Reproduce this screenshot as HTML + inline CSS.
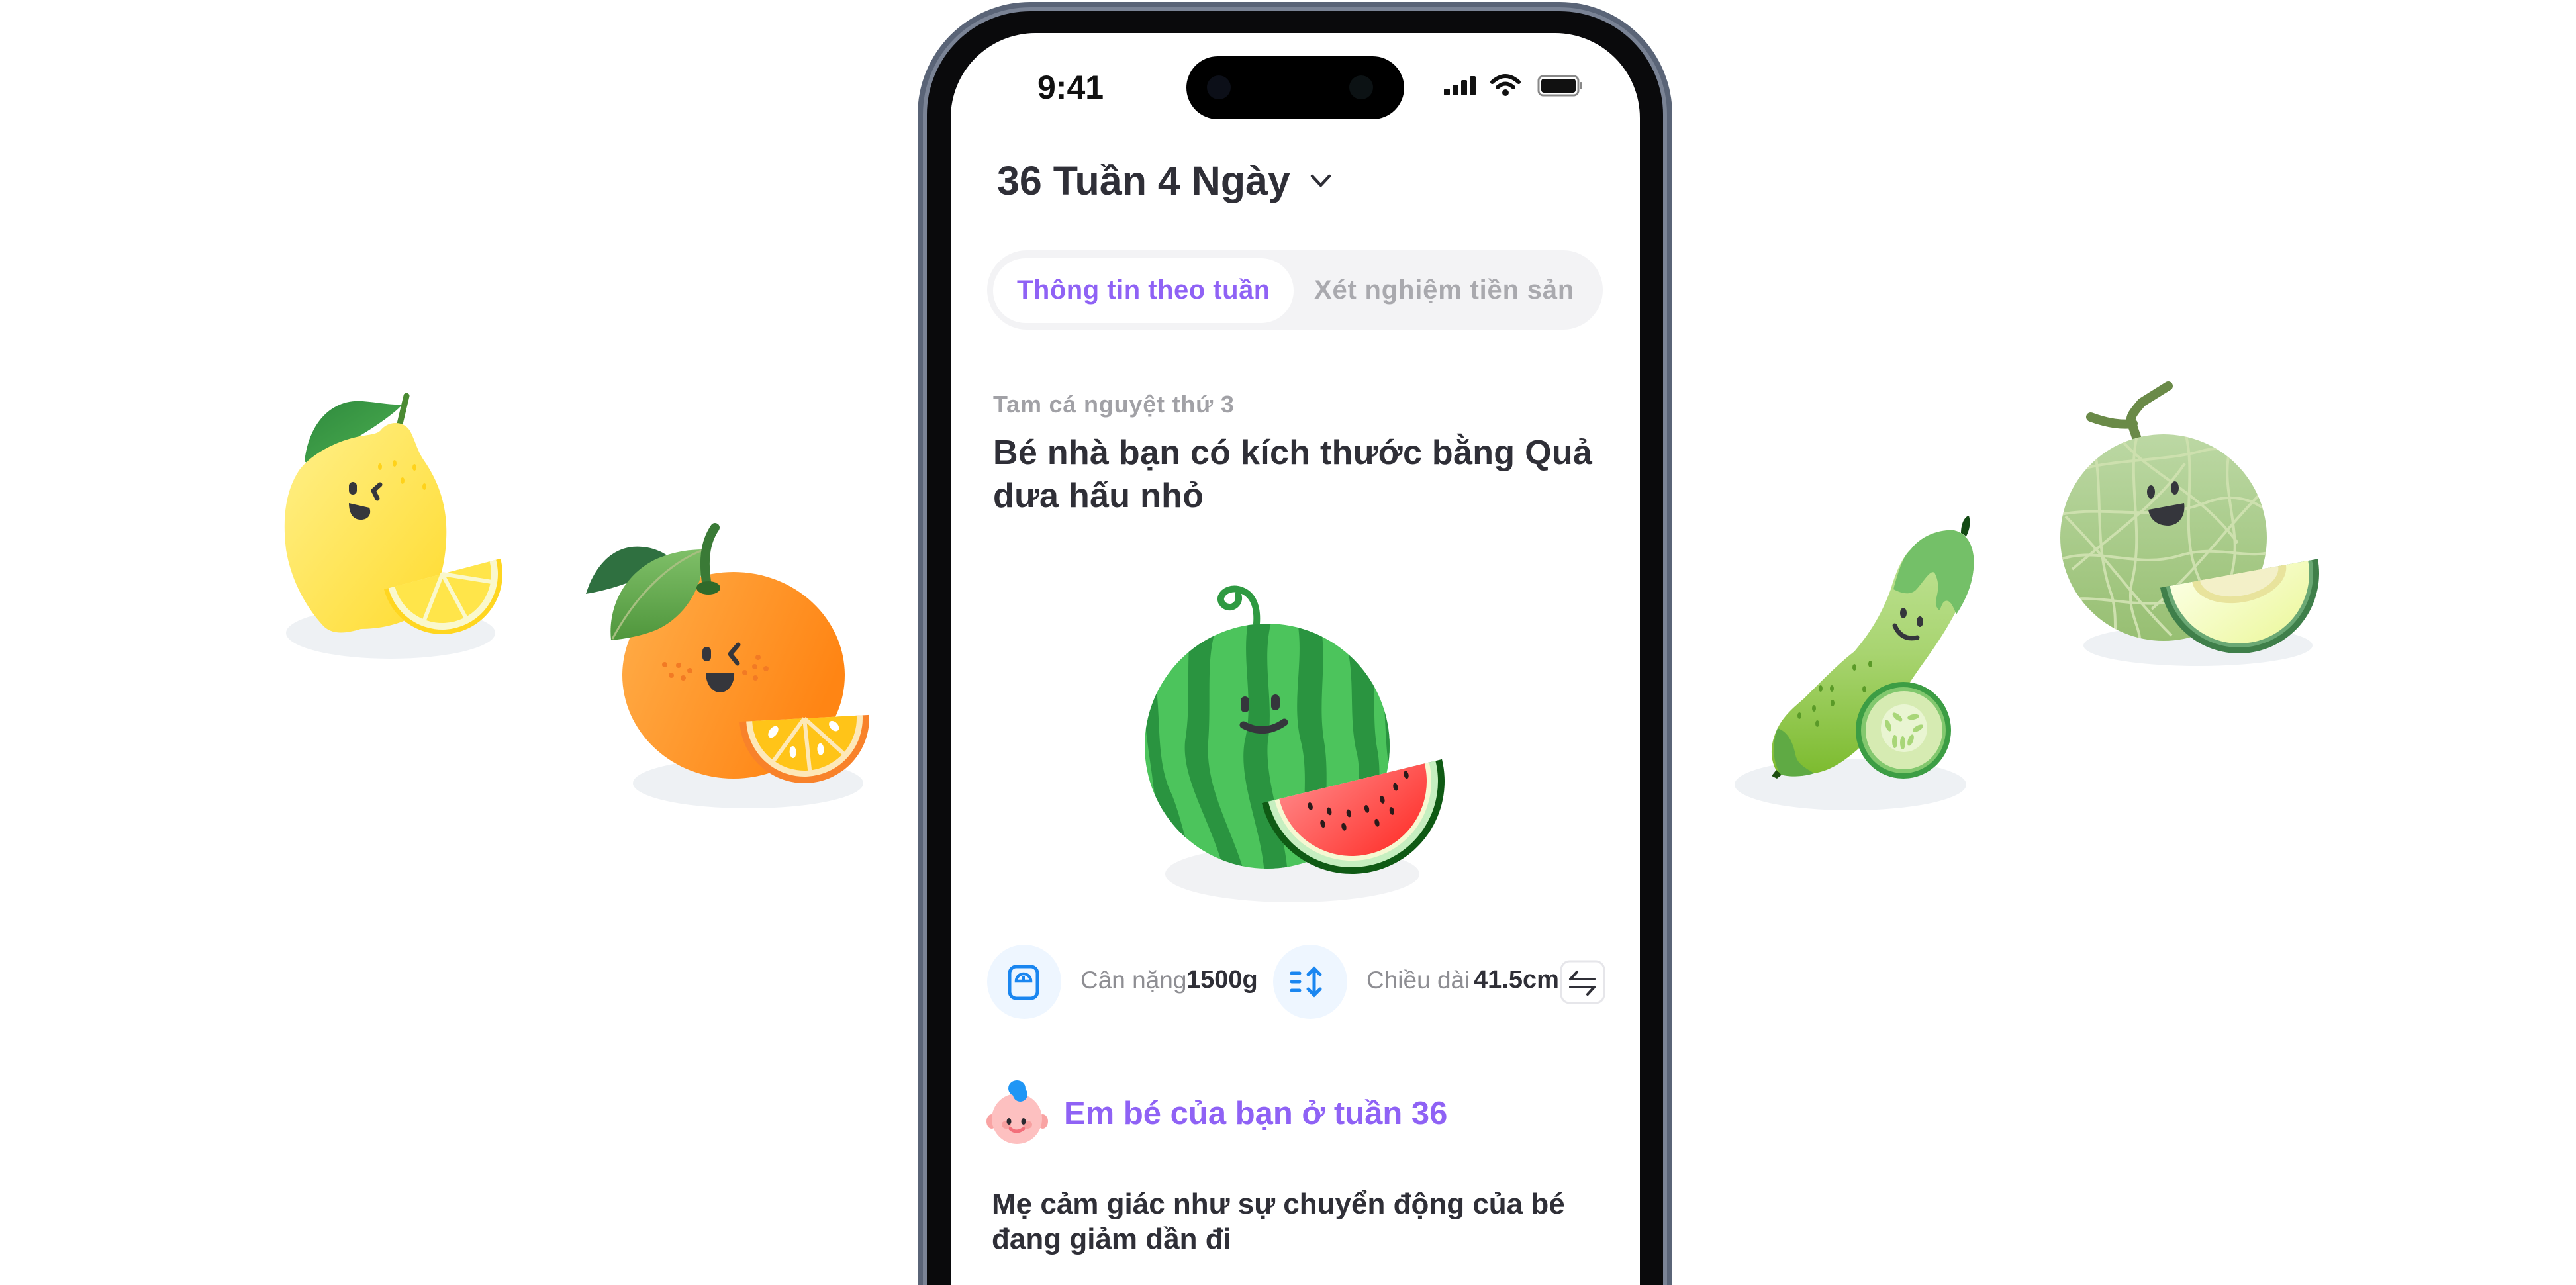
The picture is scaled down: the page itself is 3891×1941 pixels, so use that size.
<!DOCTYPE html>
<html><head><meta charset="utf-8">
<style>
html,body{margin:0;padding:0;background:#fff;overflow:hidden;}
html{width:3891px;height:1941px;}
body{width:3891px;height:1941px;position:relative;overflow:hidden;font-family:"Liberation Sans",Arial,sans-serif;}
.t{position:absolute;white-space:nowrap;line-height:1;}
</style></head><body>
<svg width="3891" height="1941" viewBox="0 0 3891 1941" style="position:absolute;left:0;top:0" xmlns="http://www.w3.org/2000/svg">
<defs>
<linearGradient id="lemG" x1="0" y1="0" x2="1" y2="1"><stop offset="0" stop-color="#fff08a"/><stop offset="1" stop-color="#ffdb2e"/></linearGradient>
<linearGradient id="orG" x1="0" y1="0" x2="1" y2="0.4"><stop offset="0" stop-color="#ffae4a"/><stop offset="1" stop-color="#ff8514"/></linearGradient>
<linearGradient id="leafG" x1="0" y1="0" x2="1" y2="1"><stop offset="0" stop-color="#2f8a3e"/><stop offset="1" stop-color="#4caf50"/></linearGradient>
<linearGradient id="leafG2" x1="0" y1="0" x2="0" y2="1"><stop offset="0" stop-color="#7fbf68"/><stop offset="1" stop-color="#4f963c"/></linearGradient>
<linearGradient id="cucG" x1="0" y1="0" x2="0" y2="1"><stop offset="0" stop-color="#c3e59a"/><stop offset="0.5" stop-color="#a8d470"/><stop offset="1" stop-color="#7cbb2e"/></linearGradient>
<linearGradient id="melG" x1="0" y1="0" x2="0" y2="1"><stop offset="0" stop-color="#bcd8a4"/><stop offset="1" stop-color="#97bf72"/></linearGradient>
<linearGradient id="redG" x1="0" y1="0" x2="1" y2="1"><stop offset="0" stop-color="#ff8080"/><stop offset="1" stop-color="#ff2a24"/></linearGradient>
<linearGradient id="melFlesh" x1="0" y1="0" x2="1" y2="1"><stop offset="0" stop-color="#fbffe0"/><stop offset="1" stop-color="#ebf79a"/></linearGradient>
<clipPath id="wmClip"><circle cx="1914" cy="1127" r="185"/></clipPath>
<clipPath id="melClip"><ellipse cx="3268" cy="812" rx="156" ry="156"/></clipPath>
</defs>

<ellipse cx="590" cy="956" rx="158" ry="39" fill="#eef1f4"/>
<ellipse cx="1130" cy="1183" rx="174" ry="38" fill="#eef1f4"/>
<ellipse cx="2795" cy="1185" rx="175" ry="39" fill="#eef1f4"/>
<ellipse cx="3320" cy="975" rx="173" ry="31" fill="#eef1f4"/>

<!-- LEMON -->
<path d="M604,640 L614,598" stroke="#4a8a32" stroke-width="9" stroke-linecap="round"/>
<path d="M460,697 C466,640 500,602 548,606 C572,608 590,612 608,611 C580,640 520,672 468,702 Z" fill="url(#leafG)"/>
<path d="M575,650 C585,636 610,634 620,652 C628,668 630,680 640,695 C668,735 676,775 674,815 C672,860 660,895 640,920 C610,945 570,950 545,950 C520,958 500,958 488,945 C465,920 440,880 432,830 C426,780 432,740 452,710 C475,680 520,662 550,658 C562,656 570,655 575,650 Z" fill="url(#lemG)"/>
<g fill="#ffd21a"><ellipse cx="574" cy="705" rx="3" ry="5"/><ellipse cx="596" cy="700" rx="3" ry="5"/><ellipse cx="626" cy="706" rx="3" ry="5"/><ellipse cx="608" cy="726" rx="3" ry="5"/><ellipse cx="641" cy="735" rx="3" ry="5"/></g>
<rect x="527" y="728" width="12" height="19" rx="6" fill="#35363c"/>
<path d="M574,732 L564,741 L570,753" stroke="#35363c" stroke-width="7" fill="none" stroke-linecap="round" stroke-linejoin="round"/>
<path d="M527,760 L558,767 C562,778 555,785 545,785 C533,785 527,775 527,760 Z" fill="#35363c"/>
<g transform="translate(668,867) rotate(-14.7)">
<path d="M-91,0 A91,91 0 0 0 91,0 Z" fill="#ffd620"/>
<path d="M-84,0 A84,84 0 0 0 84,0 Z" fill="#faf8cc"/>
<path d="M-74,0 A74,74 0 0 0 74,0 Z" fill="#ffe54a"/>
<g stroke="#faf8cc" stroke-width="6"><line x1="0" y1="0" x2="-45" y2="62"/><line x1="0" y1="0" x2="18" y2="74"/><line x1="0" y1="0" x2="68" y2="30"/></g>
</g>

<!-- ORANGE -->
<ellipse cx="1108" cy="1020" rx="168" ry="156" fill="url(#orG)"/>
<path d="M885,897 C900,850 930,822 970,826 C995,828 1010,840 1020,848 C980,870 930,890 885,897 Z" fill="#2f7040"/>
<path d="M923,967 C918,920 940,870 990,845 C1020,832 1045,830 1064,830 C1064,880 1040,930 990,952 C970,960 945,965 923,967 Z" fill="url(#leafG2)"/>
<path d="M925,965 C960,900 1010,850 1064,830" stroke="#a6bf80" stroke-width="3" fill="none"/>
<path d="M1068,885 C1062,850 1064,820 1080,797" stroke="#3a7a36" stroke-width="14" fill="none" stroke-linecap="round"/>
<ellipse cx="1070" cy="888" rx="18" ry="10" fill="#2f6a2a"/>
<rect x="1061" y="977" width="13" height="22" rx="6.5" fill="#35363c"/>
<path d="M1115,974 L1103,988 L1114,1002" stroke="#35363c" stroke-width="7" fill="none" stroke-linecap="round" stroke-linejoin="round"/>
<path d="M1066,1016 L1109,1016 C1110,1032 1100,1046 1088,1046 C1075,1046 1066,1032 1066,1016 Z" fill="#35363c"/>
<g fill="#f27a24"><circle cx="1004" cy="1004" r="4"/><circle cx="1025" cy="1005" r="4"/><circle cx="1042" cy="1013" r="4"/><circle cx="1014" cy="1020" r="4"/><circle cx="1032" cy="1024" r="4"/><circle cx="1145" cy="993" r="4"/><circle cx="1140" cy="1007" r="4"/><circle cx="1157" cy="1010" r="4"/><circle cx="1125" cy="1016" r="4"/><circle cx="1141" cy="1024" r="4"/></g>
<g transform="translate(1215,1085) rotate(-3)">
<path d="M-98,0 A98,98 0 0 0 98,0 Z" fill="#f8822a"/>
<path d="M-88,0 A88,88 0 0 0 88,0 Z" fill="#fde8b8"/>
<path d="M-79,0 A79,79 0 0 0 79,0 Z" fill="#ffc418"/>
<g stroke="#fde8b8" stroke-width="6"><line x1="0" y1="0" x2="-50" y2="62"/><line x1="0" y1="0" x2="4" y2="79"/><line x1="0" y1="0" x2="56" y2="56"/></g>
<g fill="#fff"><ellipse cx="-48" cy="18" rx="6" ry="10" transform="rotate(40 -48 18)"/><ellipse cx="-20" cy="50" rx="5" ry="9"/><ellipse cx="22" cy="48" rx="5" ry="9"/><ellipse cx="44" cy="14" rx="6" ry="9" transform="rotate(-40 44 14)"/></g>
</g>

<!-- PHONE -->
<rect x="1386" y="3" width="1140" height="2100" rx="170" fill="#5a6477"/>
<rect x="1394" y="11" width="1124" height="2090" rx="162" fill="#7a8395"/>
<rect x="1400" y="17" width="1112" height="2080" rx="156" fill="#0a0a0c"/>
<rect x="1436" y="50" width="1041" height="2040" rx="128" fill="#ffffff"/>
<rect x="1792" y="85" width="329" height="95" rx="47.5" fill="#000"/>
<circle cx="1841" cy="132" r="18" fill="#0c0f18"/><circle cx="2056" cy="132" r="18" fill="#0c1214"/>
<g fill="#111"><rect x="2181" y="134" width="9" height="10" rx="2"/><rect x="2194" y="128" width="9" height="16" rx="2"/><rect x="2207" y="121" width="9" height="23" rx="2"/><rect x="2220" y="115" width="9" height="29" rx="2"/></g>
<g fill="none" stroke="#111" stroke-width="6" stroke-linecap="round"><path d="M2254,124 Q2274,106 2294,124"/><path d="M2262,132 Q2274,121 2286,132"/></g>
<circle cx="2274" cy="140" r="5" fill="#111"/>
<rect x="2324" y="115" width="60" height="29" rx="7" fill="none" stroke="#888" stroke-width="3"/>
<rect x="2328" y="119" width="52" height="21" rx="4" fill="#111"/>
<rect x="2386" y="124" width="4" height="11" rx="2" fill="#888"/>
<path d="M1982,266 L1995,280 L2008,266" stroke="#2f2f37" stroke-width="4.5" fill="none" stroke-linecap="round" stroke-linejoin="round"/>
<rect x="1491" y="378" width="930" height="120" rx="60" fill="#f3f3f5"/>
<rect x="1500" y="390" width="454" height="98" rx="49" fill="#fff"/>

<!-- WATERMELON -->
<path d="M1898,942 C1900,915 1892,895 1870,890 C1850,886 1835,905 1850,915 C1862,922 1875,910 1870,898" stroke="#2f9a42" stroke-width="10" fill="none" stroke-linecap="round"/>
<ellipse cx="1952" cy="1320" rx="192" ry="43" fill="#f1f2f4"/>
<circle cx="1914" cy="1127" r="185" fill="#4cc45c"/>
<g clip-path="url(#wmClip)" fill="#2a9440">
<path d="M1735,980 C1760,1060 1740,1140 1770,1200 C1790,1250 1790,1290 1820,1320 L1790,1330 C1760,1270 1745,1220 1740,1170 C1730,1100 1720,1040 1735,980 Z"/>
<path d="M1800,940 C1790,1000 1800,1060 1790,1120 C1785,1180 1830,1240 1850,1320 L1880,1320 C1860,1250 1820,1190 1825,1120 C1830,1050 1820,990 1840,940 Z"/>
<path d="M1885,940 C1875,1000 1895,1060 1880,1120 C1870,1180 1905,1250 1910,1320 L1945,1320 C1940,1250 1910,1180 1915,1120 C1925,1060 1905,1000 1920,940 Z"/>
<path d="M1960,940 C1970,1000 1950,1060 1965,1120 C1980,1180 1960,1250 1975,1320 L2010,1310 C1995,1250 2010,1180 2000,1120 C1990,1060 2005,1000 1995,945 Z"/>
<path d="M2030,960 C2050,1020 2035,1080 2050,1140 C2060,1190 2040,1250 2050,1300 L2080,1280 C2075,1230 2090,1180 2080,1130 C2070,1070 2085,1020 2060,975 Z"/>
<path d="M2085,1020 C2095,1070 2090,1120 2100,1170 L2110,1180 L2110,1020 Z"/>
</g>
<rect x="1874" y="1052" width="13" height="24" rx="6.5" fill="#35363c"/><rect x="1920" y="1049" width="13" height="24" rx="6.5" fill="#35363c"/>
<path d="M1878,1095 Q1910,1112 1940,1091" stroke="#35363c" stroke-width="11" fill="none" stroke-linecap="round"/>
<g transform="translate(2042,1180) rotate(-13.7)">
<path d="M-140,0 A140,140 0 0 0 140,0 Z" fill="#0f5a14"/>
<path d="M-130,0 A130,130 0 0 0 130,0 Z" fill="#c6efc0"/>
<path d="M-120,0 A120,120 0 0 0 120,0 Z" fill="#f6f8d2"/>
<path d="M-113,0 A113,113 0 0 0 113,0 Z" fill="url(#redG)"/>
<g fill="#2a1a1a"><ellipse cx="-70" cy="22" rx="3.5" ry="6"/><ellipse cx="-44" cy="36" rx="3.5" ry="6"/><ellipse cx="-16" cy="46" rx="3.5" ry="6"/><ellipse cx="12" cy="46" rx="3.5" ry="6"/><ellipse cx="38" cy="38" rx="3.5" ry="6"/><ellipse cx="62" cy="24" rx="3.5" ry="6"/><ellipse cx="-58" cy="52" rx="3.5" ry="6"/><ellipse cx="-28" cy="64" rx="3.5" ry="6"/><ellipse cx="22" cy="70" rx="3.5" ry="6"/><ellipse cx="48" cy="58" rx="3.5" ry="6"/><ellipse cx="82" cy="10" rx="3.5" ry="6"/></g>
</g>

<!-- stats -->
<circle cx="1547" cy="1483" r="56" fill="#eef6ff"/>
<rect x="1525" y="1460" width="42" height="48" rx="10" fill="none" stroke="#1a86f0" stroke-width="5"/>
<path d="M1535,1482 A11,11 0 0 1 1557,1482 Z" fill="none" stroke="#1a86f0" stroke-width="4.5"/>
<line x1="1546" y1="1474" x2="1546" y2="1482" stroke="#1a86f0" stroke-width="4"/>
<circle cx="1979" cy="1483" r="56" fill="#eef6ff"/>
<g stroke="#1a86f0" stroke-width="5" stroke-linecap="round" fill="none">
<line x1="1951" y1="1470" x2="1963" y2="1470"/><line x1="1951" y1="1483" x2="1963" y2="1483"/><line x1="1951" y1="1496" x2="1963" y2="1496"/>
<line x1="1985" y1="1463" x2="1985" y2="1503"/><path d="M1976,1472 L1985,1463 L1994,1472"/><path d="M1976,1494 L1985,1503 L1994,1494"/></g>
<rect x="2358" y="1452" width="65" height="63" rx="13" fill="#fff" stroke="#e6e6ea" stroke-width="3"/>
<g stroke="#2f2f37" stroke-width="4" stroke-linecap="round" fill="none"><path d="M2372,1479 L2408,1479 M2372,1479 L2382,1468"/><path d="M2372,1491 L2408,1491 M2408,1491 L2398,1502"/></g>

<!-- baby icon -->
<ellipse cx="1498" cy="1694" rx="8" ry="11" fill="#f9a3a3"/><ellipse cx="1575" cy="1694" rx="8" ry="11" fill="#f9a3a3"/>
<circle cx="1536" cy="1690" r="38" fill="#fdc0c0"/>
<ellipse cx="1536" cy="1644" rx="13" ry="12" fill="#1f96f5"/><circle cx="1541" cy="1653" r="11" fill="#1f96f5"/>
<ellipse cx="1520" cy="1699" rx="7" ry="6" fill="#f7a0a0"/><ellipse cx="1552" cy="1699" rx="7" ry="6" fill="#f7a0a0"/>
<ellipse cx="1524" cy="1694" rx="3.5" ry="5" fill="#2a2a30"/><ellipse cx="1546" cy="1694" rx="3.5" ry="5" fill="#2a2a30"/>
<path d="M1526,1705 Q1535,1713 1546,1705" stroke="#f36f7a" stroke-width="5" fill="none" stroke-linecap="round"/>

<!-- CUCUMBER -->
<path d="M2962,805 C2962,790 2968,780 2974,779 C2977,790 2975,800 2970,810 Z" fill="#134a14"/>
<path d="M2683,1163 L2676,1172 L2684,1176 L2694,1168 Z" fill="#1d4e10"/>
<path d="M2941,801 C2960,798 2978,812 2981,840 C2984,875 2970,905 2953,926 C2930,970 2905,1000 2886,1029 C2855,1080 2830,1110 2807,1131 C2780,1155 2760,1165 2740,1168 C2715,1174 2690,1175 2681,1160 C2672,1140 2676,1118 2685,1100 C2695,1080 2710,1068 2725,1055 C2760,1020 2780,1000 2801,984 C2830,950 2845,920 2856,890 C2865,860 2875,840 2886,830 C2900,812 2920,803 2941,801 Z" fill="url(#cucG)"/>
<path d="M2941,801 C2960,798 2978,812 2981,840 C2984,875 2970,905 2955,928 C2950,915 2945,905 2938,908 C2930,912 2932,930 2925,916 C2920,905 2935,890 2922,865 C2915,860 2905,880 2893,892 C2885,898 2875,898 2860,890 C2868,860 2875,840 2886,830 C2900,812 2920,803 2941,801 Z" fill="#74c068"/>
<path d="M2685,1100 C2677,1120 2676,1150 2690,1170 C2705,1175 2730,1172 2740,1168 C2728,1160 2715,1155 2712,1140 C2708,1120 2700,1105 2685,1100 Z" fill="#5faa44"/>
<g fill="#5a9a28"><ellipse cx="2801" cy="1008" rx="3" ry="5"/><ellipse cx="2825" cy="1003" rx="3" ry="5"/><ellipse cx="2750" cy="1040" rx="3" ry="5"/><ellipse cx="2767" cy="1040" rx="3" ry="5"/><ellipse cx="2816" cy="1041" rx="3" ry="5"/><ellipse cx="2740" cy="1070" rx="3" ry="5"/><ellipse cx="2768" cy="1062" rx="3" ry="5"/><ellipse cx="2718" cy="1081" rx="3" ry="5"/><ellipse cx="2745" cy="1093" rx="3" ry="5"/></g>
<ellipse cx="2875" cy="926" rx="5" ry="8" fill="#35363c"/><ellipse cx="2900" cy="939" rx="5" ry="8" fill="#35363c"/>
<path d="M2862,945 Q2872,968 2896,963" stroke="#35363c" stroke-width="7" fill="none" stroke-linecap="round"/>
<ellipse cx="2875" cy="1103" rx="72" ry="73" fill="#3c9d44"/>
<ellipse cx="2875" cy="1103" rx="64" ry="65" fill="#82c86e"/>
<ellipse cx="2876" cy="1103" rx="58" ry="59" fill="#d6ebb2"/>
<ellipse cx="2876" cy="1100" rx="35" ry="36" fill="#e9f5d2"/>
<g fill="#a8d678"><ellipse cx="2866" cy="1083" rx="4" ry="9" transform="rotate(-50 2866 1083)"/><ellipse cx="2890" cy="1083" rx="4" ry="9" transform="rotate(80 2890 1083)"/><ellipse cx="2897" cy="1100" rx="4" ry="9" transform="rotate(60 2897 1100)"/><ellipse cx="2852" cy="1096" rx="4" ry="9" transform="rotate(-20 2852 1096)"/><ellipse cx="2862" cy="1120" rx="4" ry="10"/><ellipse cx="2874" cy="1122" rx="4" ry="10"/><ellipse cx="2886" cy="1118" rx="4" ry="9" transform="rotate(20 2886 1118)"/></g>

<!-- MELON -->
<path d="M3228,663 L3220,640 C3215,630 3225,620 3235,608 L3275,583" stroke="#6a8a48" stroke-width="14" fill="none" stroke-linecap="round" stroke-linejoin="round"/>
<path d="M3158,630 C3185,640 3205,642 3222,640" stroke="#6a8a48" stroke-width="14" fill="none" stroke-linecap="round"/>
<ellipse cx="3268" cy="812" rx="156" ry="156" fill="url(#melG)"/>
<g clip-path="url(#melClip)" stroke="#cde0ae" stroke-width="4" fill="none">
<path d="M3110,720 C3180,690 3260,700 3330,680 C3380,670 3420,700 3440,720"/>
<path d="M3100,780 C3170,760 3250,790 3330,760 C3380,740 3420,760 3440,790"/>
<path d="M3100,850 C3160,820 3220,860 3290,840 C3350,820 3400,850 3440,830"/>
<path d="M3100,910 C3170,890 3240,930 3310,900 C3370,880 3410,910 3440,900"/>
<path d="M3160,660 C3180,740 3160,820 3190,900 C3200,940 3190,960 3200,980"/>
<path d="M3230,650 C3210,720 3240,800 3220,880 C3210,930 3240,950 3230,980"/>
<path d="M3300,650 C3320,720 3290,800 3320,870 C3340,920 3310,950 3330,980"/>
<path d="M3370,670 C3350,740 3390,800 3370,870 C3360,920 3390,950 3380,980"/>
<path d="M3120,780 C3180,840 3220,900 3280,960"/>
<path d="M3200,660 C3250,720 3320,740 3380,820"/>
<path d="M3420,740 C3360,800 3320,860 3250,920"/>
<path d="M3300,700 C3260,760 3200,800 3130,860"/>
</g>
<ellipse cx="3249" cy="743" rx="6" ry="10" fill="#35363c"/><ellipse cx="3285" cy="737" rx="6" ry="10" fill="#35363c"/>
<path d="M3245,770 L3299,760 C3302,780 3290,794 3275,794 C3258,794 3247,784 3245,770 Z" fill="#35363c"/>
<g transform="translate(3382,866) rotate(-10.3)">
<path d="M-121,0 A121,121 0 0 0 121,0 Z" fill="#3f7f4a"/>
<path d="M-112,0 A112,112 0 0 0 112,0 Z" fill="#6aa874"/>
<path d="M-106,0 A106,106 0 0 0 106,0 Z" fill="url(#melFlesh)"/>
<path d="M-72,0 A72,44 0 0 0 72,0 Z" fill="#e8e39c"/>
<path d="M-60,0 A60,34 0 0 0 60,0 Z" fill="#f3f0c8"/>
</g>
</svg>

<div class="t" style="left:1567px;top:107px;font-size:50px;font-weight:bold;color:#111;">9:41</div>
<div class="t" style="left:1506px;top:243px;font-size:61px;font-weight:bold;color:#2f2f37;">36 Tuần 4 Ngày</div>
<div class="t" style="left:1536px;top:418px;font-size:40px;font-weight:bold;color:#8f62f5;letter-spacing:0.5px;">Thông tin theo tuần</div>
<div class="t" style="left:1985px;top:418px;font-size:40px;font-weight:bold;color:#a9a9ae;letter-spacing:0.8px;">Xét nghiệm tiền sản</div>
<div class="t" style="left:1500px;top:593px;font-size:36px;font-weight:bold;color:#a1a1a6;letter-spacing:0.8px;">Tam cá nguyệt thứ 3</div>
<div class="t" style="left:1500px;top:660px;font-size:52px;font-weight:bold;color:#2f2f37;line-height:65px;margin-top:-8px;letter-spacing:0.3px;">Bé nhà bạn có kích thước bằng Quả<br>dưa hấu nhỏ</div>
<div class="t" style="left:1632px;top:1462px;font-size:37px;color:#8e8e93;">Cân nặng</div>
<div class="t" style="left:1792px;top:1461px;font-size:38px;font-weight:bold;color:#2f2f37;">1500g</div>
<div class="t" style="left:2064px;top:1462px;font-size:37px;color:#8e8e93;">Chiều dài</div>
<div class="t" style="left:2226px;top:1461px;font-size:38px;font-weight:bold;color:#2f2f37;">41.5cm</div>
<div class="t" style="left:1607px;top:1658px;font-size:49px;font-weight:bold;color:#8f62f5;">Em bé của bạn ở tuần 36</div>
<div class="t" style="left:1498px;top:1796px;font-size:44px;font-weight:bold;color:#2f2f37;line-height:53px;margin-top:-4px;">Mẹ cảm giác như sự chuyển động của bé<br>đang giảm dần đi</div>
</body></html>
